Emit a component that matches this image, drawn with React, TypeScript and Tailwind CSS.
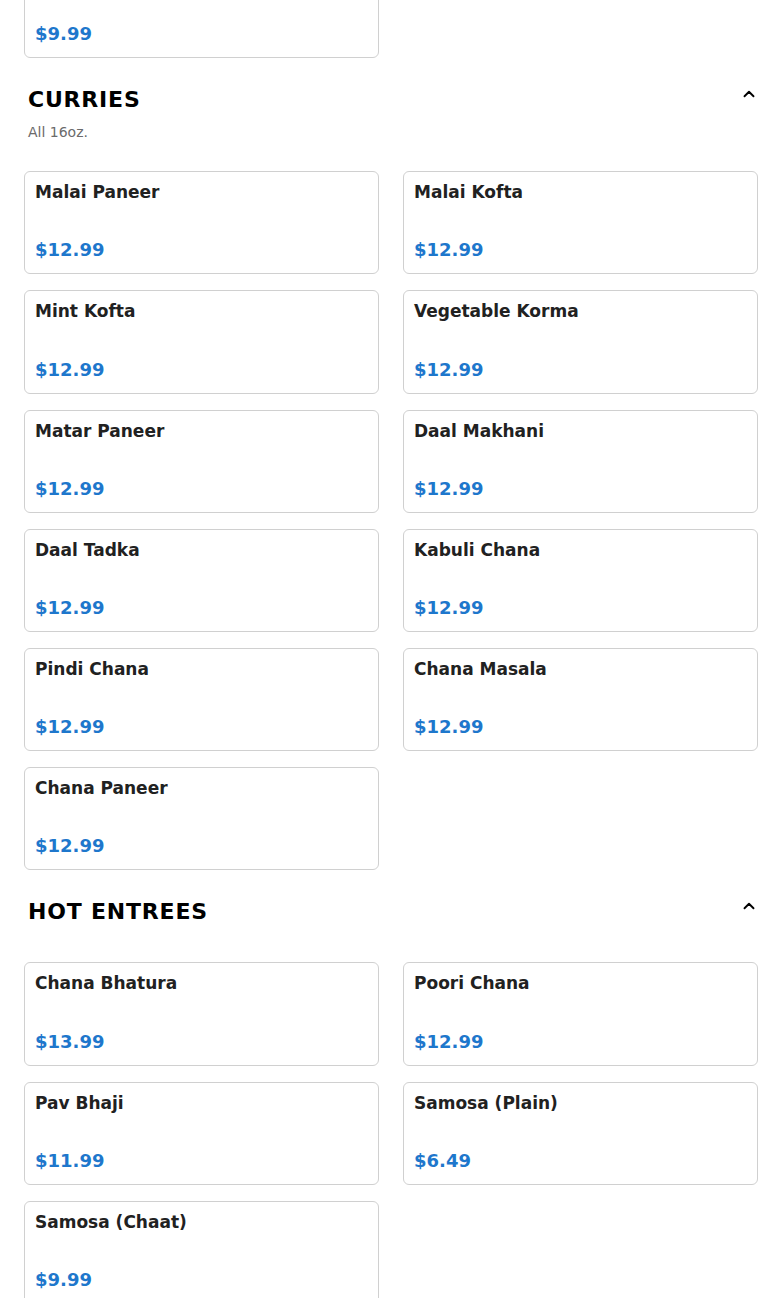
import { ChevronUp } from 'lucide-react';

type Item = { name: string; price: string };

const curries: Item[] = [
  { name: 'Malai Paneer', price: '$12.99' },
  { name: 'Malai Kofta', price: '$12.99' },
  { name: 'Mint Kofta', price: '$12.99' },
  { name: 'Vegetable Korma', price: '$12.99' },
  { name: 'Matar Paneer', price: '$12.99' },
  { name: 'Daal Makhani', price: '$12.99' },
  { name: 'Daal Tadka', price: '$12.99' },
  { name: 'Kabuli Chana', price: '$12.99' },
  { name: 'Pindi Chana', price: '$12.99' },
  { name: 'Chana Masala', price: '$12.99' },
  { name: 'Chana Paneer', price: '$12.99' },
];

const hotEntrees: Item[] = [
  { name: 'Chana Bhatura', price: '$13.99' },
  { name: 'Poori Chana', price: '$12.99' },
  { name: 'Pav Bhaji', price: '$11.99' },
  { name: 'Samosa (Plain)', price: '$6.49' },
  { name: 'Samosa (Chaat)', price: '$9.99' },
];

const MenuCard = ({ item }: { item: Item }) => (
  <div className="h-[103.2px] rounded-md border border-[#d0d0d0] bg-white px-[10px] pt-[9px] pb-[11px] flex flex-col justify-between">
    <h4 className="text-[17px] leading-[22px] font-bold text-[#212121]">{item.name}</h4>
    <p className="text-[18px] leading-[24px] font-bold text-[#1e77cc]">{item.price}</p>
  </div>
);

const Section = ({ title, note, items }: { title: string; note?: string; items: Item[] }) => (
  <section>
    <div className="flex items-start justify-between pl-1">
      <div>
        <h2 className="text-[22px] leading-[28px] font-bold tracking-[0.8px] text-black">{title}</h2>
        {note ? (
          <p className="mt-[8px] mb-[29px] text-[14px] leading-[20px] text-[#6b6b6b]">{note}</p>
        ) : (
          <div className="h-[36px]" />
        )}
      </div>
      <ChevronUp className="mt-[-1px] w-[18px] h-[18px] text-black" strokeWidth={2.5} />
    </div>
    <div className="grid grid-cols-2 gap-x-6 gap-y-4">
      {items.map((it) => (
        <MenuCard key={it.name} item={it} />
      ))}
    </div>
  </section>
);

export default function App() {
  return (
    <div className="w-[782px] h-[1298px] overflow-hidden bg-white font-['DejaVu_Sans',sans-serif]">
      <div className="px-6 mt-[-45px]">
        <div className="grid grid-cols-2 gap-x-6">
          <MenuCard item={{ name: 'Samosa Chaat', price: '$9.99' }} />
        </div>
        <div className="mt-[28px]">
          <Section title="CURRIES" note="All 16oz." items={curries} />
        </div>
        <div className="mt-[28px]">
          <Section title="HOT ENTREES" items={hotEntrees} />
        </div>
      </div>
    </div>
  );
}
